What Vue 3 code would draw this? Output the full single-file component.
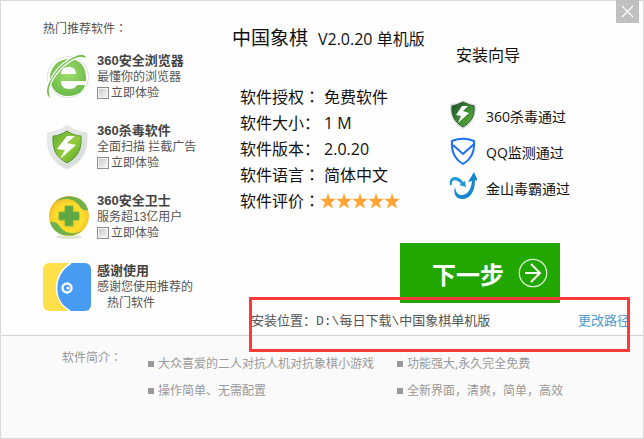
<template>
  <div class="installer">
    <button class="close" type="button" aria-label="关闭">
      <svg viewBox="0 0 23 23" width="23" height="23">
        <path d="M6 6 17 17M17 6 6 17" stroke="#fff" stroke-width="1.3" fill="none" />
      </svg>
    </button>

    <main class="main">
      <aside class="promo">
        <h2 class="promo-title">热门推荐软件<span class="colon">：</span></h2>
        <ul class="promo-list">
          <li v-for="item in promos" :key="item.id" class="promo-item">
            <!-- Navegador -->
            <svg v-if="item.id === 'browser'" class="promo-icon" viewBox="0 0 48 48">
              <defs>
                <radialGradient id="browser-fill" cx="50%" cy="40%" r="60%">
                  <stop offset="0" stop-color="#a2dc70" />
                  <stop offset="1" stop-color="#6cba48" />
                </radialGradient>
              </defs>
              <circle cx="25" cy="24" r="20.5" fill="#fff" stroke="#dde0db" />
              <path
                d="M43 28H18c0 5 3 8 8 8 4 0 6-1 8-4h8c-2 7-8 11-17 11C14 43 7 35 7 25 7 14 15 6 26 6c11 0 18 8 17 22ZM18 21h15c0-5-3-7-7-7-5 0-8 3-8 7Z"
                fill="url(#browser-fill)"
              />
              <path
                d="M43 8C42 1 28 5 17 17 6 29 4 40 9 46 3 45 1 37 7 27 16 9 37-3 43 3Z"
                fill="#78c053"
                stroke="#fff"
                stroke-width="1.2"
              />
            </svg>

            <!-- Antivirus -->
            <svg v-else-if="item.id === 'antivirus'" class="promo-icon" viewBox="0 0 48 48">
              <defs>
                <linearGradient id="shield-edge" x1="0" y1="0" x2="1" y2="1">
                  <stop offset="0" stop-color="#eceeef" />
                  <stop offset="1" stop-color="#d5dad4" />
                </linearGradient>
                <linearGradient id="shield-fill" x1="0" y1="0" x2="1" y2="1">
                  <stop offset="0" stop-color="#63aa35" />
                  <stop offset=".55" stop-color="#95ce3c" />
                  <stop offset="1" stop-color="#4d9a24" />
                </linearGradient>
              </defs>
              <path
                d="M24 2c6 5 13 7 20 8 1 17-4 29-20 36C8 39 3 27 5 10c7-1 13-3 19-8Z"
                fill="url(#shield-edge)"
                stroke="#e2e5e3"
              />
              <path
                d="M24 8c5 3 9 5 14 5 1 13-3 21-14 27C13 34 9 26 10 13c5 0 9-2 14-5Z"
                fill="url(#shield-fill)"
                stroke="#5c963b"
              />
              <path d="M24 13 14 26l8 1-5 9 16-14-9-2 8-7Z" fill="#fff" />
            </svg>

            <!-- Guardián -->
            <svg v-else-if="item.id === 'guard'" class="promo-icon" viewBox="0 0 48 48">
              <defs>
                <radialGradient id="guard-fill" cx="50%" cy="55%" r="55%">
                  <stop offset="0" stop-color="#f9c43a" />
                  <stop offset=".6" stop-color="#ffdf2c" />
                  <stop offset="1" stop-color="#eebb2a" />
                </radialGradient>
              </defs>
              <ellipse cx="26" cy="44" rx="13" ry="2" fill="#dfe4d8" />
              <circle cx="26" cy="23" r="20" fill="url(#guard-fill)" />
              <path
                d="M12 9C23-1 42 3 45 17c-4 1-7-1-9-5C31 5 21 4 12 9Z"
                fill="#6fb14a"
              />
              <path
                d="M7 29c5-1 8 1 11 6 5 6 14 7 22 2C29 47 10 43 7 29Z"
                fill="#6fb14a"
              />
              <path
                d="M22 13h8v6h6v8h-6v6h-8v-6h-6v-8h6Z"
                fill="#5fa843"
                stroke="#7fb932"
                stroke-linejoin="round"
              />
            </svg>

            <!-- Agradecimiento -->
            <svg v-else class="promo-icon" viewBox="0 0 48 48">
              <rect width="48" height="48" rx="6" fill="#ffe04a" />
              <path
                d="M28 0h14a6 6 0 0 1 6 6v36a6 6 0 0 1-6 6H27C9 38 9 12 28 0Z"
                fill="#489bf2"
              />
              <path d="M28 0C9 12 9 38 27 48" fill="none" stroke="#fff" stroke-width="1.5" />
              <circle cx="24" cy="25" r="5.7" fill="#fff" />
              <circle cx="24" cy="25" r="3.3" fill="#489bf2" />
              <circle cx="25" cy="25" r="1.5" fill="#fff" />
            </svg>

            <div class="promo-text">
              <h3>{{ item.name }}</h3>
              <p>{{ item.text }}</p>
              <label v-if="item.optional" class="promo-check">
                <input v-model="item.checked" type="checkbox" />
                立即体验
              </label>
              <p v-else class="promo-more">热门软件</p>
            </div>
          </li>
        </ul>
      </aside>

      <section class="content">
        <div class="columns">
          <div class="info">
            <h1 class="title">中国象棋 <small>V2.0.20 单机版</small></h1>
            <dl class="specs">
              <div v-for="spec in specs" :key="spec.label" class="spec">
                <dt>{{ spec.label }}<span :class="{ colon: spec.centered }">：</span></dt>
                <dd v-if="spec.value">{{ spec.value }}</dd>
                <dd v-else class="stars">
                  <svg v-for="n in 5" :key="n" viewBox="0 0 16 16" width="16" height="16">
                    <path
                      d="m8 0 2 5.7h6l-4.8 3.7L13 15.4 8 11.9l-5 3.5 1.8-6L0 5.7h6Z"
                      fill="#ffa435"
                    />
                  </svg>
                </dd>
              </div>
            </dl>
          </div>

          <div class="guide">
            <h2 class="guide-title">安装向导</h2>
            <ul class="checks">
              <li>
                <svg viewBox="0 0 28 32" width="28" height="32">
                  <defs>
                    <linearGradient id="pass-fill" x1="0" y1="0" x2="1" y2="1">
                      <stop offset="0" stop-color="#174d27" />
                      <stop offset=".5" stop-color="#3c8a35" />
                      <stop offset="1" stop-color="#5fb52c" />
                    </linearGradient>
                  </defs>
                  <path
                    d="M14 0c4 2 8 4 13 4 1 12-3 20-13 25C4 24 0 16 1 4c5 0 9-2 13-4Z"
                    fill="#dcdfdf"
                  />
                  <path
                    d="M14 2c4 2 7 3 11 4 1 10-3 16-11 21C6 22 2 16 3 6c4-1 7-2 11-4Z"
                    fill="url(#pass-fill)"
                    stroke="#2d5436"
                  />
                  <path d="m13 6-6 9 5 1-3 7 11-10-6-2 5-5Z" fill="#fff" />
                </svg>
                360杀毒通过
              </li>
              <li>
                <svg viewBox="0 0 28 32" width="28" height="32">
                  <path
                    d="M3 5c7-3 15-3 22 0 1 11-2 18-11 23C5 23 2 16 3 5Z"
                    fill="#fff"
                    stroke="#1b6ff5"
                    stroke-width="2"
                    stroke-linejoin="round"
                  />
                  <path d="m4 9 10 9L25 8" fill="none" stroke="#1b6ff5" stroke-width="2" />
                </svg>
                QQ监测通过
              </li>
              <li>
                <svg viewBox="0 0 28 32" width="28" height="32">
                  <path
                    d="M1 13C-1 4 9 2 14 10l2-1 1 6-7-2 2-1C8 7 2 7 3 13Z"
                    fill="#2497d8"
                  />
                  <path
                    d="M6 15c1 6 3 8 7 8 5 0 9-5 10-14l-4 1 6-10 4 9-3-1c0 12-5 19-13 19C7 27 4 22 6 15Z"
                    fill="#1688d2"
                  />
                </svg>
                金山毒霸通过
              </li>
            </ul>
          </div>
        </div>

        <button class="next" type="button">
          下一步
          <svg viewBox="0 0 30 30" width="30" height="30">
            <circle cx="15" cy="15" r="13.7" fill="none" stroke="#d5f0cf" stroke-width="1.3" />
            <path d="M7 15h15M13 6l9 9-9 9" fill="none" stroke="#fff" stroke-width="2" />
          </svg>
        </button>

        <div class="path">
          <span>安装位置：{{ installPath }}</span>
          <a href="#" @click.prevent>更改路径</a>
        </div>
      </section>
    </main>

    <footer class="footer">
      <h2>软件简介<span class="colon">：</span></h2>
      <ul class="features">
        <li v-for="feature in features" :key="feature">{{ feature }}</li>
      </ul>
    </footer>
  </div>
</template>

<script setup>
  import { ref } from "vue";

  const promos = ref([
    {
      id: "browser",
      name: "360安全浏览器",
      text: "最懂你的浏览器",
      optional: true,
      checked: false,
    },
    {
      id: "antivirus",
      name: "360杀毒软件",
      text: "全面扫描 拦截广告",
      optional: true,
      checked: false,
    },
    {
      id: "guard",
      name: "360安全卫士",
      text: "服务超13亿用户",
      optional: true,
      checked: false,
    },
    {
      id: "thanks",
      name: "感谢使用",
      text: "感谢您使用推荐的",
      optional: false,
    },
  ]);

  const specs = [
    { label: "软件授权", value: "免费软件", centered: true },
    { label: "软件大小", value: "1 M" },
    { label: "软件版本", value: "2.0.20" },
    { label: "软件语言", value: "简体中文", centered: true },
    { label: "软件评价", centered: true },
  ];

  const installPath = ref("D:\\每日下载\\中国象棋单机版");

  const features = [
    "大众喜爱的二人对抗人机对抗象棋小游戏",
    "功能强大,永久完全免费",
    "操作简单、无需配置",
    "全新界面，清爽，简单，高效",
  ];
</script>

<style>
  body {
    margin: 0;
  }
</style>

<style scoped>
  .installer {
    position: relative;
    display: flex;
    flex-direction: column;
    box-sizing: border-box;
    min-height: 100vh;
    border: 1px solid #d9d9d9;
    background: #fefefe;
    color: #111;
    font-family: "Open Sans", "Noto Sans CJK SC", sans-serif;
  }

  h1,
  h2,
  h3,
  p,
  ul,
  dl,
  dd {
    margin: 0;
    padding: 0;
    font-weight: normal;
    list-style: none;
  }

  svg {
    display: block;
    flex: none;
  }

  .colon {
    font-family: "Noto Sans CJK TC", sans-serif;
    line-height: 1;
  }

  .close {
    position: absolute;
    top: -1px;
    right: 4px;
    padding: 0;
    border: 0;
    background: #c0c0c0;
    cursor: pointer;
  }

  .main {
    display: flex;
  }

  .promo {
    flex: 0 0 189px;
    padding: 20px 0 0 42px;
    color: #555;
    font-family: "Liberation Sans", "Noto Sans CJK SC", sans-serif;
    font-size: 12px;
    line-height: 16px;
  }

  .promo-title {
    font-size: 12px;
  }

  .promo-list {
    display: flex;
    flex-direction: column;
    gap: 22px;
    padding-top: 16px;
  }

  .promo-item {
    display: flex;
    gap: 6px;
  }

  .promo-icon {
    width: 48px;
    height: 48px;
  }

  .promo-text h3 {
    color: #444;
    font-size: 13px;
    font-weight: bold;
  }

  .promo-check {
    display: flex;
    align-items: center;
    gap: 2px;
  }

  .promo-check input {
    appearance: none;
    box-sizing: border-box;
    width: 12px;
    height: 12px;
    margin: 0;
    border: 1px solid #8c8e90;
    background: linear-gradient(135deg, #c4c8cc, #f8f8f8);
    box-shadow: inset 0 0 0 1px #f4f4f4;
  }

  .promo-check input:checked {
    background: #489bf2;
  }

  .promo-more {
    padding-left: 10px;
  }

  .content {
    flex: 1;
    display: flex;
    flex-direction: column;
    padding: 24px 13px 3px 0;
  }

  .columns {
    display: flex;
  }

  .info {
    flex: 0 0 217px;
  }

  .title {
    font-size: 19px;
    line-height: 26px;
  }

  .title small {
    padding-left: 5px;
    font-size: 16px;
  }

  .specs {
    padding: 32px 0 0 8px;
    font-size: 16px;
    line-height: 26px;
  }

  .spec {
    display: flex;
    gap: 4px;
    height: 26px;
  }

  .stars {
    display: flex;
    align-items: center;
    margin-left: -4px;
  }

  .guide {
    flex: 1;
    padding-top: 17px;
  }

  .guide-title {
    padding-left: 7px;
    font-size: 16px;
    line-height: 26px;
  }

  .checks {
    padding-top: 30px;
    font-size: 14px;
  }

  .checks li {
    display: flex;
    align-items: center;
    gap: 9px;
    height: 36px;
  }

  .next {
    display: flex;
    align-items: center;
    align-self: flex-end;
    justify-content: center;
    gap: 14px;
    width: 160px;
    height: 60px;
    margin: 29px 70px 0 0;
    padding: 0 0 0 20px;
    border: 0;
    background: #22a600;
    color: #fff;
    font: bold 24px "Noto Sans CJK SC", sans-serif;
    cursor: pointer;
  }

  .path {
    position: relative;
    display: flex;
    justify-content: space-between;
    margin: 9px 0 0 17px;
    padding-left: 2px;
    color: #555;
    font-family: "Liberation Mono", "Noto Sans CJK SC", monospace;
    font-size: 13px;
    line-height: 20px;
  }

  /* Recuadro rojo alrededor de la ruta */
  .path::after {
    content: "";
    position: absolute;
    inset: -15px 0 -20px;
    border: 3px solid #ff3838;
    pointer-events: none;
  }

  .path a {
    color: #4f9bcd;
    text-decoration: none;
  }

  .footer {
    flex: 1;
    display: flex;
    gap: 26px;
    padding: 14px 13px 14px 61px;
    border-top: 1px solid #d2d2d2;
    background: #fafafa;
    color: #999;
    font-size: 12px;
    line-height: 16px;
  }

  .footer h2 {
    font-size: 12px;
  }

  .features {
    flex: 1;
    display: grid;
    grid-template-columns: 249px 1fr;
    align-content: start;
    line-height: 27px;
  }

  .features li {
    display: flex;
    align-items: center;
    gap: 4px;
  }

  .features li::before {
    content: "";
    width: 6px;
    height: 6px;
    background: #999;
  }
</style>
